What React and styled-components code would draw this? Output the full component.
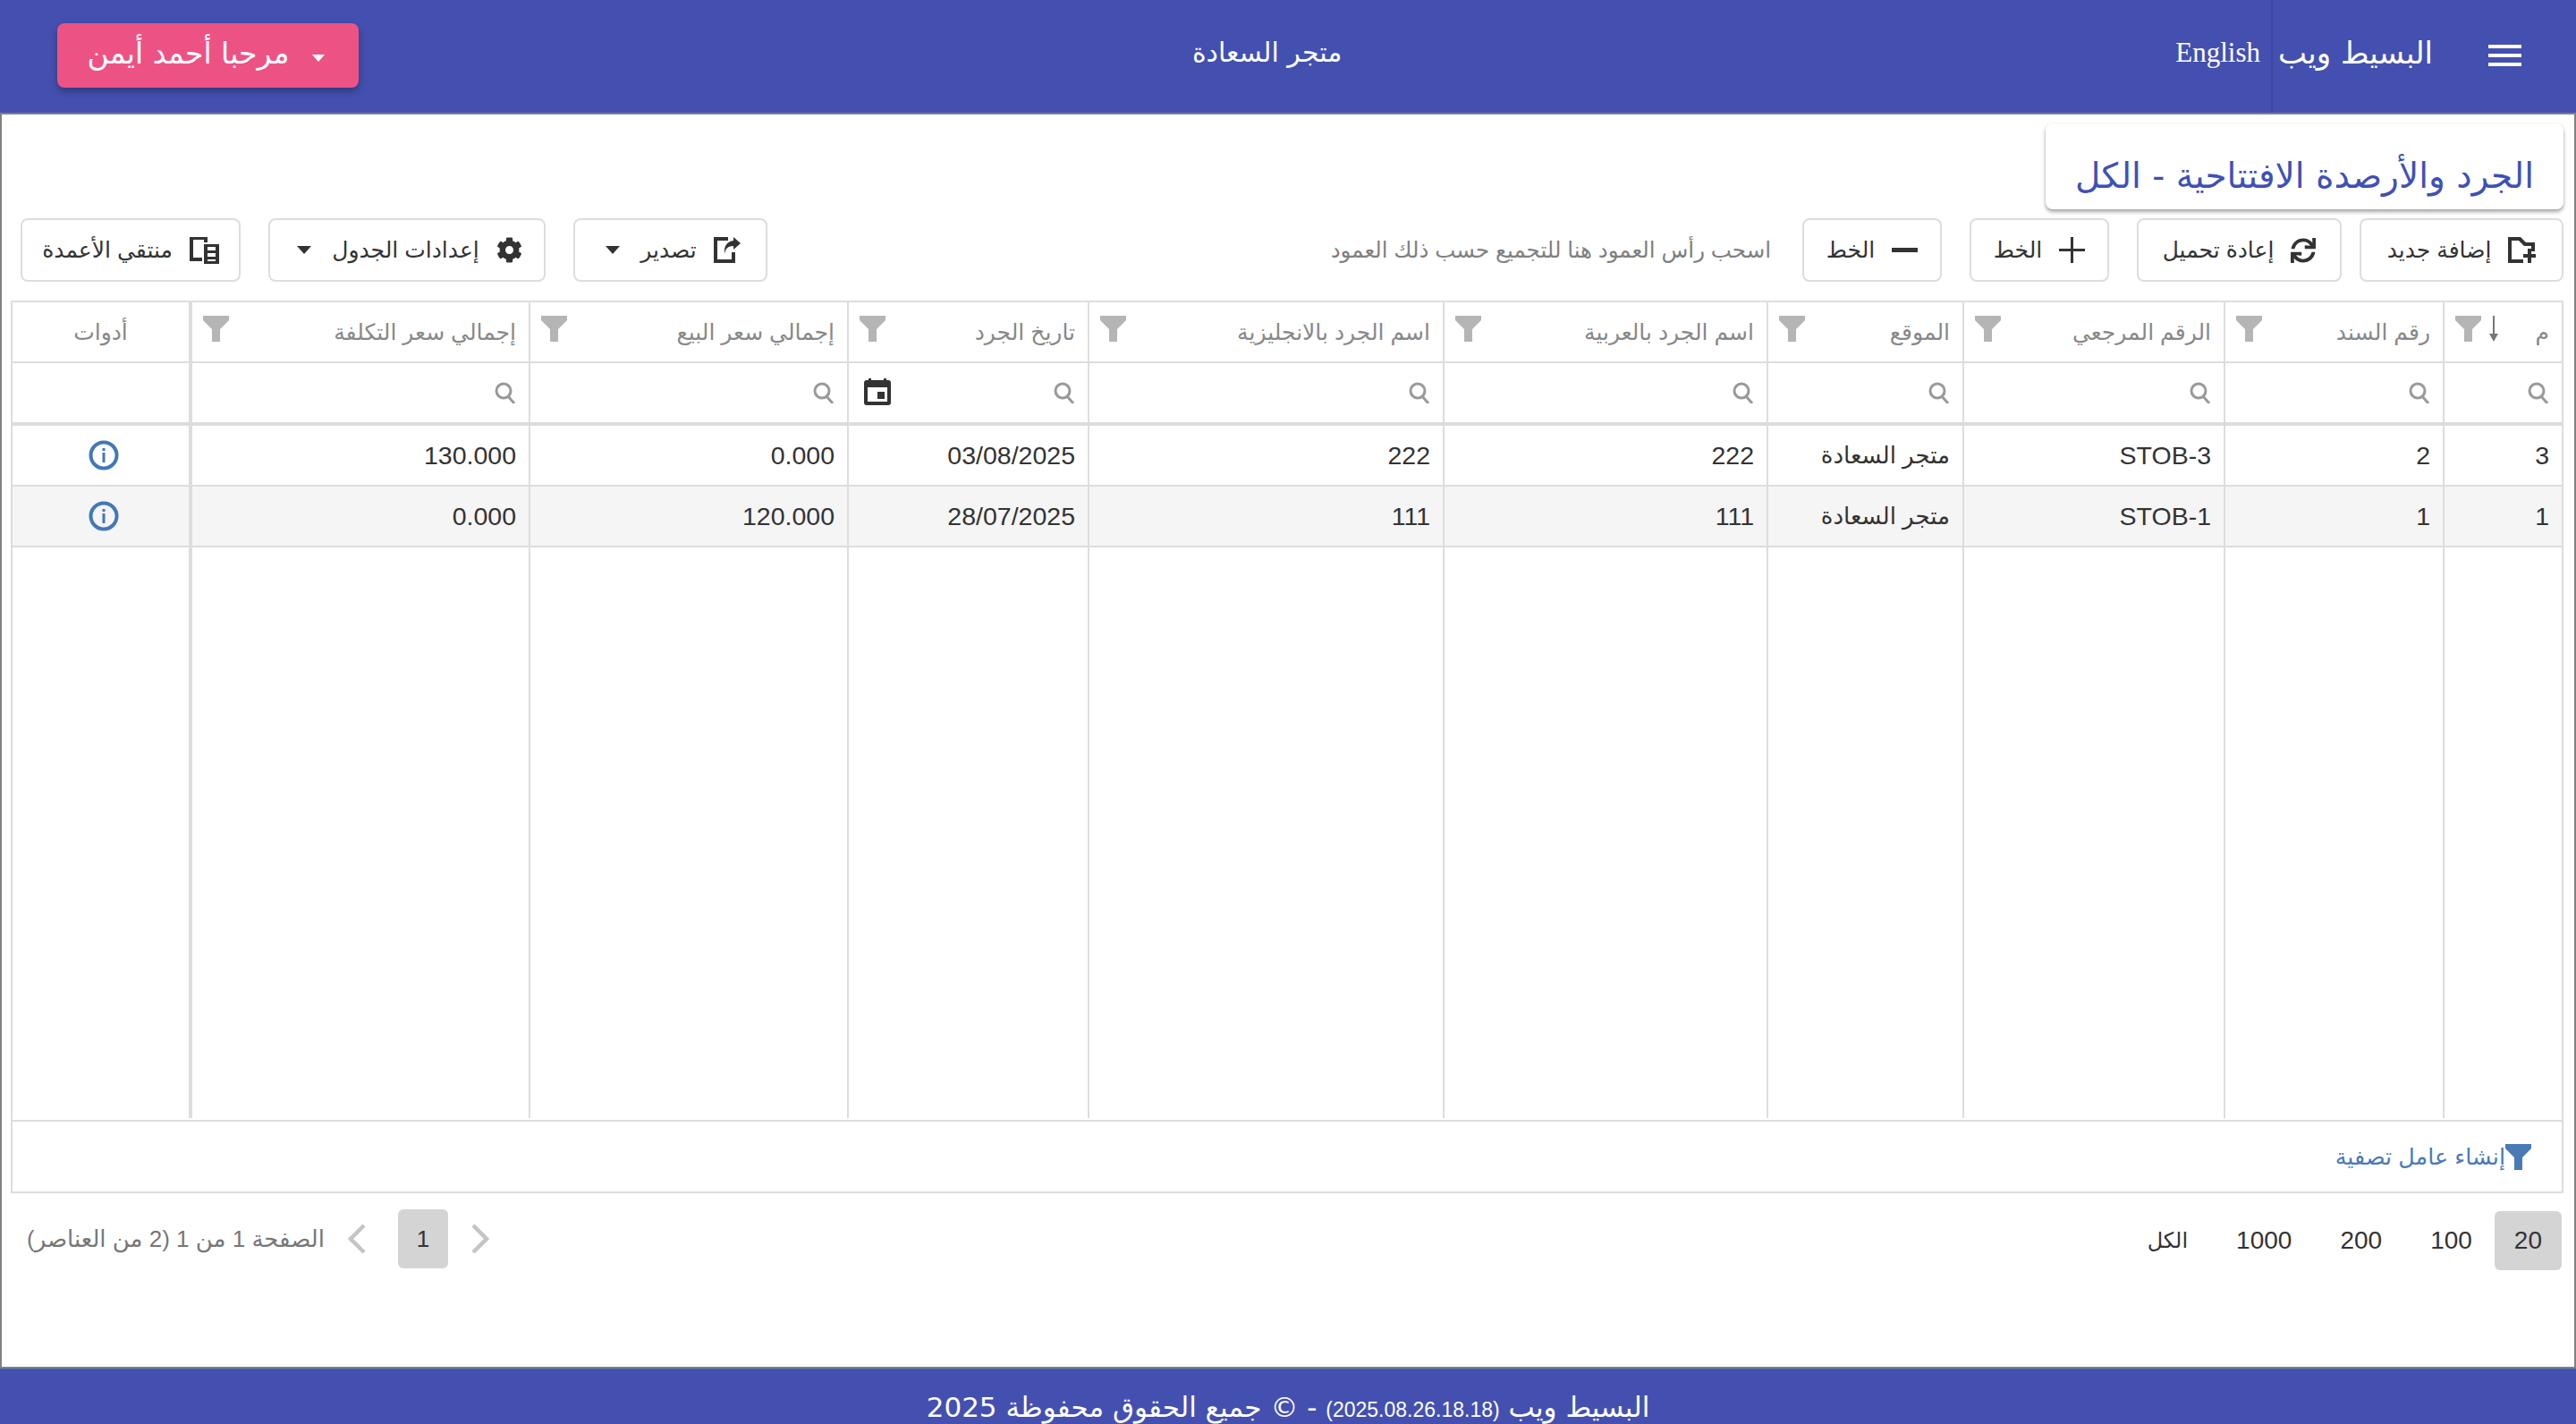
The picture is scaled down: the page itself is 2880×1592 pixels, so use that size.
import React from "react";
import styled, { createGlobalStyle } from "styled-components";
import { FaSync, FaCog } from "react-icons/fa";

const COLUMNS = "133px 245px 292px 219px 362px 397px 269px 356px 380px 197px";

const headers = [
  { title: "م", sort: true, filter: true },
  { title: "رقم السند", filter: true },
  { title: "الرقم المرجعي", filter: true },
  { title: "الموقع", filter: true },
  { title: "اسم الجرد بالعربية", filter: true },
  { title: "اسم الجرد بالانجليزية", filter: true },
  { title: "تاريخ الجرد", filter: true, calendar: true },
  { title: "إجمالي سعر البيع", filter: true },
  { title: "إجمالي سعر التكلفة", filter: true, fixed: true },
  { title: "أدوات", center: true },
];

const rows = [
  ["3", "2", "STOB-3", "متجر السعادة", "222", "222", "03/08/2025", "0.000", "130.000"],
  ["1", "1", "STOB-1", "متجر السعادة", "111", "111", "28/07/2025", "120.000", "0.000"],
];

const Funnel = ({ size = 29, color = "#b5b5b5" }) => (
  <svg width={size} height={size} viewBox="0 0 29 29">
    <path d="M0 0H29V5L19 15V29H10V15L0 5Z" fill={color} />
  </svg>
);

const SearchIcon = () => (
  <svg width="24" height="24" viewBox="0 0 24 24" fill="none" stroke="#999" strokeWidth="3">
    <circle cx="10" cy="10" r="8" />
    <path d="M15 16L22 24" />
  </svg>
);

const CalendarIcon = () => (
  <svg width="30" height="30" viewBox="0 0 30 30">
    <path d="M5 0H8V2H22V0H25V2H27A3 3 0 0 1 30 5V27A3 3 0 0 1 27 30H3A3 3 0 0 1 0 27V5A3 3 0 0 1 3 2H5Z" fill="#333" />
    <rect x="4" y="10" width="22" height="16" fill="#fff" />
    <rect x="15" y="15" width="8" height="8" fill="#333" />
  </svg>
);

const InfoIcon = () => (
  <svg width="34" height="34" viewBox="0 0 34 34">
    <circle cx="17" cy="17" r="14.5" fill="none" stroke="#4278b8" strokeWidth="4" />
    <rect x="15.5" y="14" width="3" height="11" fill="#4278b8" />
    <rect x="15.5" y="9" width="3" height="3" fill="#4278b8" />
  </svg>
);

const SortIcon = () => (
  <svg width="10" height="29" viewBox="0 0 10 29" fill="#777">
    <rect x="4" width="2" height="22" />
    <path d="M0 20H10L5 29Z" />
  </svg>
);

const NewFolderIcon = () => (
  <svg width="31" height="29" viewBox="0 0 31 29" fill="#333">
    <path d="M0 0H14L20 6H30V16H26V10H18L12 4H4V25H17V29H0Z" />
    <path d="M22 13H26V19H31V23H26V29H22V23H17V19H22Z" />
  </svg>
);

const PlusIcon = () => (
  <svg width="29" height="29" viewBox="0 0 29 29" fill="#333">
    <path d="M13 0H16V13H29V16H16V29H13V16H0V13H13Z" />
  </svg>
);

const MinusIcon = () => (
  <svg width="29" height="29" viewBox="0 0 29 29" fill="#333">
    <rect y="12" width="29" height="5" />
  </svg>
);

const ExportIcon = () => (
  <svg width="30" height="29" viewBox="0 0 30 29" fill="#333">
    <path d="M0 0H16V4H4V25H20V17H24V29H0Z" />
    <path d="M22 0L30 7L22 14V10C16 10 13 13 12 19C11 10 15 5 22 4Z" />
  </svg>
);

const ColumnsIcon = () => (
  <svg width="33" height="30" viewBox="0 0 33 30" fill="#333">
    <path d="M0 0H20V6H16V3H4V23H14V27H0Z" />
    <path d="M16 8H33V30H16ZM20 11V15H29V11ZM20 18V22H29V18ZM20 25V27H29V25Z" fillRule="evenodd" />
  </svg>
);

const MenuIcon = () => (
  <svg width="37" height="24" viewBox="0 0 37 24" fill="#fff">
    <rect width="37" height="4" />
    <rect y="10" width="37" height="4" />
    <rect y="20" width="37" height="4" />
  </svg>
);

const Chevron = ({ dir }) => (
  <svg width="20" height="34" viewBox="0 0 20 34" fill="none" stroke="#c4c4c4" strokeWidth="4.5">
    <path d={dir === "left" ? "M18 2L3 17L18 32" : "M2 2L17 17L2 32"} />
  </svg>
);

export default function App() {
  return (
    <>
      <GlobalStyle />
      <Page dir="rtl">
        <TopBar>
          <BrandGroup>
            <MenuButton>
              <MenuIcon />
            </MenuButton>
            <Brand>البسيط ويب</Brand>
            <LangLink>English</LangLink>
          </BrandGroup>
          <StoreName>متجر السعادة</StoreName>
          <UserButton>
            <UserCaret $color="#fff" $size={7} />
            <UserName>مرحبا أحمد أيمن</UserName>
          </UserButton>
        </TopBar>

        <Main>
          <TitleCard>الجرد والأرصدة الافتتاحية - الكل</TitleCard>

          <Toolbar>
            <ToolGroup>
              <FirstPair>
                <ToolButton $width={228}>
                  <NewFolderIcon />
                  إضافة جديد
                </ToolButton>
                <ToolButton $width={229}>
                  <FaSync size={28} color="#333" />
                  إعادة تحميل
                </ToolButton>
              </FirstPair>
              <ToolButton $width={156}>
                <PlusIcon />
                الخط
              </ToolButton>
              <ToolButton $width={156}>
                <MinusIcon />
                الخط
              </ToolButton>
              <Hint>اسحب رأس العمود هنا للتجميع حسب ذلك العمود</Hint>
            </ToolGroup>
            <ToolGroup>
              <ToolButton $width={217}>
                <ExportIcon />
                تصدير
                <Caret $color="#333" $size={8} />
              </ToolButton>
              <ToolButton $width={310}>
                <FaCog size={29} color="#333" />
                إعدادات الجدول
                <Caret $color="#333" $size={8} />
              </ToolButton>
              <ToolButton $width={246}>
                <ColumnsIcon />
                منتقي الأعمدة
              </ToolButton>
            </ToolGroup>
          </Toolbar>

          <Grid>
            <HeaderRow>
              {headers.map((h) => (
                <HeaderCell key={h.title} $fixed={h.fixed} $center={h.center}>
                  <span>{h.title}</span>
                  {h.sort && (
                    <SortSlot>
                      <SortIcon />
                    </SortSlot>
                  )}
                  {h.filter && (
                    <FilterSlot>
                      <Funnel />
                    </FilterSlot>
                  )}
                </HeaderCell>
              ))}
            </HeaderRow>
            <FilterRow>
              {headers.map((h) => (
                <FilterCell key={h.title} $fixed={h.fixed}>
                  {h.filter && <SearchIcon />}
                  {h.calendar && (
                    <CalendarSlot>
                      <CalendarIcon />
                    </CalendarSlot>
                  )}
                </FilterCell>
              ))}
            </FilterRow>
            {rows.map((row, r) => (
              <DataRow key={row[2]} $alt={r === 1}>
                {row.map((value, i) => (
                  <DataCell key={i} $fixed={i === 8} $arabic={i === 3}>
                    {value}
                  </DataCell>
                ))}
                <DataCell $center>
                  <InfoIcon />
                </DataCell>
              </DataRow>
            ))}
            <FillerRow>
              {headers.map((h) => (
                <FillerCell key={h.title} $fixed={h.fixed} />
              ))}
            </FillerRow>
            <FilterPanel>
              <Funnel color="#4a7ab5" />
              <span>إنشاء عامل تصفية</span>
            </FilterPanel>
          </Grid>

          <Pager>
            <PageSizes>
              <PageSize $active>20</PageSize>
              <PageSize>100</PageSize>
              <PageSize>200</PageSize>
              <PageSize>1000</PageSize>
              <PageSize $arabic>الكل</PageSize>
            </PageSizes>
            <PageNav>
              <Chevron dir="right" />
              <PageNumber>1</PageNumber>
              <Chevron dir="left" />
              <PageInfo>الصفحة 1 من 1 (2 من العناصر)</PageInfo>
            </PageNav>
          </Pager>
        </Main>

        <Footer>
          البسيط ويب <small>(2025.08.26.18.18)</small> - © جميع الحقوق محفوظة 2025
        </Footer>
      </Page>
    </>
  );
}

const GlobalStyle = createGlobalStyle`
  html, body {
    margin: 0;
    padding: 0;
    height: 100%;
    overflow: hidden;
  }
  * {
    box-sizing: border-box;
  }
  body {
    font-family: "Liberation Sans", "DejaVu Sans", sans-serif;
    color: #333;
  }
`;

const Page = styled.div`
  height: 100vh;
  display: flex;
  flex-direction: column;
`;

const TopBar = styled.header`
  height: 126px;
  flex: none;
  display: flex;
  align-items: center;
  justify-content: space-between;
  padding: 0 61px 0 64px;
  background: #4450af;
  color: #fff;
`;

const BrandGroup = styled.div`
  display: flex;
  align-items: stretch;
  height: 126px;
`;

const MenuButton = styled.div`
  display: flex;
  align-items: center;
  margin-left: 62px;
  padding-bottom: 2px;
`;

const Brand = styled.div`
  display: flex;
  align-items: center;
  padding: 0 0 8px 12px;
  border-left: 2px solid #3c47a0;
  font-size: 34px;
  font-family: "DejaVu Sans", sans-serif;
  width: 181px;
  white-space: nowrap;
`;

const LangLink = styled.div`
  display: flex;
  align-items: center;
  padding: 0 12px 8px 0;
  font-size: 31px;
  font-family: "Liberation Serif", serif;
`;

const StoreName = styled.div`
  font-size: 30px;
  font-family: "DejaVu Sans", sans-serif;
  font-weight: 500;
  padding-bottom: 10px;
`;

const UserButton = styled.button`
  width: 337px;
  height: 72px;
  margin-bottom: 2px;
  padding: 0;
  display: flex;
  align-items: center;
  justify-content: center;
  gap: 20px;
  border: 0;
  border-radius: 8px;
  background: #ec5384;
  color: #fff;
  font-size: 33px;
  font-family: "DejaVu Sans", sans-serif;
  box-shadow: 0 4px 8px rgba(0, 0, 0, 0.3);
`;

const UserName = styled.span`
  padding-bottom: 6px;
`;

const Caret = styled.span`
  width: 0;
  height: 0;
  border-left: ${(p) => p.$size}px solid transparent;
  border-right: ${(p) => p.$size}px solid transparent;
  border-top: ${(p) => p.$size + 1}px solid ${(p) => p.$color};
  margin: 0 4px 0 6px;
`;

const UserCaret = styled(Caret)`
  margin-top: 6px;
`;

const Main = styled.main`
  flex: 1;
  min-height: 0;
  border: 2px solid #808080;
  padding: 10px 0 0;
  background: #fff;
`;

const TitleCard = styled.h1`
  width: 579px;
  height: 96px;
  margin: 0 12px 0 0;
  padding: 34px 33px 0 0;
  border-radius: 8px;
  background: #fff;
  box-shadow: 0 3px 4px rgba(0, 0, 0, 0.35), 0 0 2px rgba(0, 0, 0, 0.08);
  color: #3f51b5;
  font-size: 39px;
  line-height: 50px;
  font-weight: 400;
  font-family: "DejaVu Sans", sans-serif;
  white-space: nowrap;
`;

const Toolbar = styled.div`
  height: 71px;
  margin: 10px 12px 21px 21px;
  display: flex;
  justify-content: space-between;
`;

const ToolGroup = styled.div`
  display: flex;
  align-items: stretch;
  gap: 31px;
`;

const FirstPair = styled.div`
  display: flex;
  gap: 20px;
`;

const ToolButton = styled.button`
  width: ${(p) => p.$width}px;
  display: flex;
  align-items: center;
  justify-content: center;
  gap: 19px;
  padding: 0;
  border: 2px solid #ddd;
  border-radius: 8px;
  background: #fff;
  color: #333;
  font-size: 25px;
  font-family: inherit;
  white-space: nowrap;
`;

const Hint = styled.div`
  align-self: center;
  color: #808080;
  font-size: 24.5px;
  margin-right: 4px;
  white-space: nowrap;
`;

const Grid = styled.section`
  margin: 0 12px 0 10px;
  border: 2px solid #ddd;
  height: 998px;
  display: flex;
  flex-direction: column;
`;

const HeaderRow = styled.div`
  display: grid;
  grid-template-columns: ${COLUMNS};
  height: 68px;
  flex: none;
  border-bottom: 2px solid #ddd;
`;

const HeaderCell = styled.div`
  position: relative;
  display: flex;
  align-items: center;
  justify-content: ${(p) => (p.$center ? "center" : "flex-start")};
  padding: 0 14px;
  border-left: ${(p) => (p.$fixed ? "4px" : "2px")} solid #ddd;
  color: #888;
  font-size: 25px;
  white-space: nowrap;
  &:last-child {
    border-left: 0;
  }
`;

const FilterSlot = styled.span`
  position: absolute;
  left: 12px;
  top: 15px;
  line-height: 0;
`;

const SortSlot = styled.span`
  position: absolute;
  left: 50px;
  top: 15px;
  line-height: 0;
`;

const FilterRow = styled.div`
  display: grid;
  grid-template-columns: ${COLUMNS};
  height: 70px;
  flex: none;
  border-bottom: 4px solid #ddd;
`;

const FilterCell = styled.div`
  position: relative;
  display: flex;
  align-items: center;
  padding: 0 14px;
  border-left: ${(p) => (p.$fixed ? "4px" : "2px")} solid #ddd;
  &:last-child {
    border-left: 0;
  }
`;

const CalendarSlot = styled.span`
  position: absolute;
  left: 17px;
  top: 17px;
  line-height: 0;
`;

const DataRow = styled.div`
  display: grid;
  grid-template-columns: ${COLUMNS};
  height: 68px;
  flex: none;
  border-bottom: 2px solid #ddd;
  background: ${(p) => (p.$alt ? "#f5f5f5" : "#fff")};
`;

const DataCell = styled.div`
  display: flex;
  align-items: center;
  justify-content: ${(p) => (p.$center ? "center" : "flex-start")};
  padding: ${(p) => (p.$center ? "0 16px 0 22px" : "0 14px")};
  border-left: ${(p) => (p.$fixed ? "4px" : "2px")} solid #ddd;
  font-size: ${(p) => (p.$arabic ? "26px" : "28.5px")};
  white-space: nowrap;
  &:last-child {
    border-left: 0;
  }
`;

const FillerRow = styled.div`
  display: grid;
  grid-template-columns: ${COLUMNS};
  flex: 1;
  min-height: 0;
  margin-bottom: 2px;
`;

const FillerCell = styled.div`
  border-left: ${(p) => (p.$fixed ? "4px" : "2px")} solid #ddd;
  &:last-child {
    border-left: 0;
  }
`;

const FilterPanel = styled.div`
  height: 80px;
  flex: none;
  border-top: 2px solid #ddd;
  display: flex;
  align-items: center;
  padding-right: 34px;
  color: #4a7ab5;
  font-size: 25.5px;
`;

const Pager = styled.div`
  margin: 20px 14px 0 12px;
  display: flex;
  justify-content: space-between;
  align-items: flex-start;
`;

const PageSizes = styled.div`
  display: flex;
  gap: 14px;
`;

const PageSize = styled.div`
  height: 66px;
  padding: 0 ${(p) => (p.$active ? "22px" : "20px")};
  margin-left: ${(p) => (p.$active ? "-9px" : "0")};
  display: flex;
  align-items: center;
  border-radius: 6px;
  font-size: ${(p) => (p.$arabic ? "24px" : "28px")};
  background: ${(p) => (p.$active ? "#d4d4d4" : "transparent")};
`;

const PageNav = styled.div`
  display: flex;
  align-items: center;
  height: 66px;
  margin-top: -2px;
  gap: 26px;
  padding-left: 16px;
`;

const PageNumber = styled.div`
  width: 56px;
  height: 66px;
  margin-left: 10px;
  display: flex;
  align-items: center;
  justify-content: center;
  border-radius: 6px;
  background: #d4d4d4;
  font-size: 26px;
`;

const PageInfo = styled.div`
  color: #777;
  font-size: 26px;
  white-space: nowrap;
`;

const Footer = styled.footer`
  height: 62px;
  flex: none;
  border-top: 1px solid #3b66a8;
  background: #4450af;
  color: #fff;
  font-size: 31px;
  font-family: "DejaVu Sans", sans-serif;
  text-align: center;
  padding-top: 22px;
  line-height: 40px;
  white-space: nowrap;
  overflow: hidden;
  small {
    font-family: "Liberation Sans", sans-serif;
    font-size: 23px;
  }
`;
